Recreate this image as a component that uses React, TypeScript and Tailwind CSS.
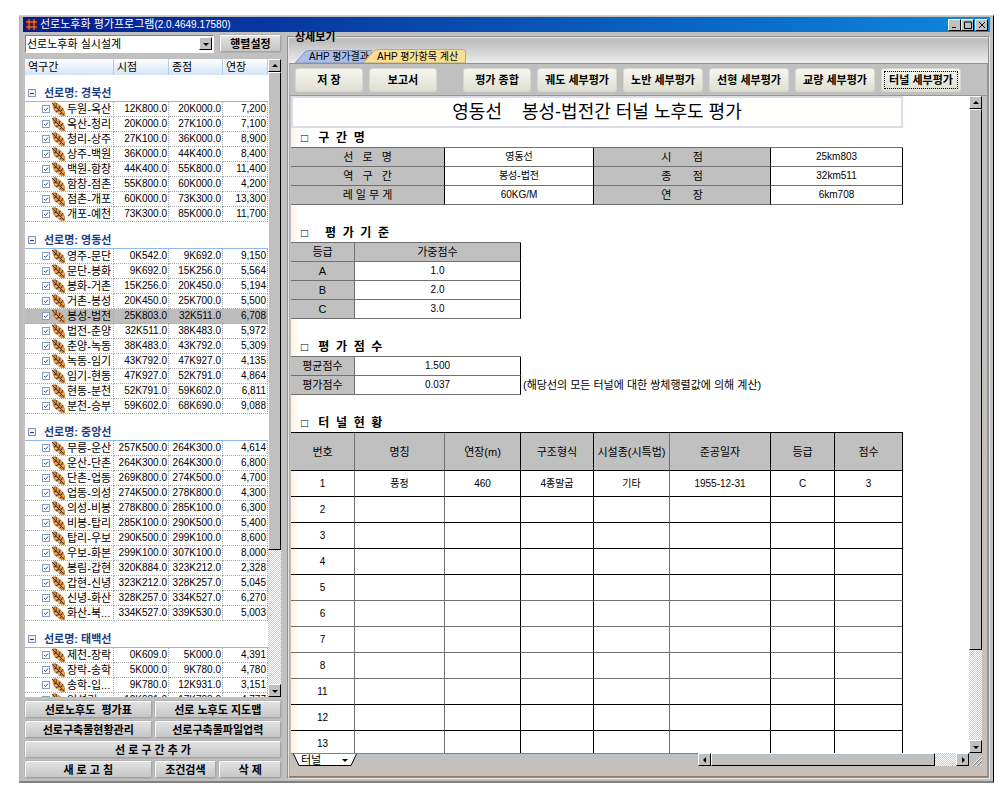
import React from "react";

type Section = [name: string, start: string, end: string, length: string];

const groups: { line: string; sections: Section[] }[] = [
  {
    line: "경북선",
    sections: [
      ["두원-옥산", "12K800.0", "20K000.0", "7,200"],
      ["옥산-청리", "20K000.0", "27K100.0", "7,100"],
      ["청리-상주", "27K100.0", "36K000.0", "8,900"],
      ["상주-백원", "36K000.0", "44K400.0", "8,400"],
      ["백원-함창", "44K400.0", "55K800.0", "11,400"],
      ["함창-점촌", "55K800.0", "60K000.0", "4,200"],
      ["점촌-개포", "60K000.0", "73K300.0", "13,300"],
      ["개포-예천", "73K300.0", "85K000.0", "11,700"],
    ],
  },
  {
    line: "영동선",
    sections: [
      ["영주-문단", "0K542.0", "9K692.0", "9,150"],
      ["문단-봉화", "9K692.0", "15K256.0", "5,564"],
      ["봉화-거촌", "15K256.0", "20K450.0", "5,194"],
      ["거촌-봉성", "20K450.0", "25K700.0", "5,500"],
      ["봉성-법전", "25K803.0", "32K511.0", "6,708"],
      ["법전-춘양", "32K511.0", "38K483.0", "5,972"],
      ["춘양-녹동", "38K483.0", "43K792.0", "5,309"],
      ["녹동-임기", "43K792.0", "47K927.0", "4,135"],
      ["임기-현동", "47K927.0", "52K791.0", "4,864"],
      ["현동-분천", "52K791.0", "59K602.0", "6,811"],
      ["분천-승부", "59K602.0", "68K690.0", "9,088"],
    ],
  },
  {
    line: "중앙선",
    sections: [
      ["무릉-운산", "257K500.0", "264K300.0", "4,614"],
      ["운산-단촌", "264K300.0", "264K300.0", "6,800"],
      ["단촌-업동", "269K800.0", "274K500.0", "4,700"],
      ["업동-의성", "274K500.0", "278K800.0", "4,300"],
      ["의성-비봉", "278K800.0", "285K100.0", "6,300"],
      ["비봉-탑리", "285K100.0", "290K500.0", "5,400"],
      ["탑리-우보", "290K500.0", "299K100.0", "8,600"],
      ["우보-화본", "299K100.0", "307K100.0", "8,000"],
      ["봉림-갑현", "320K884.0", "323K212.0", "2,328"],
      ["갑현-신녕", "323K212.0", "328K257.0", "5,045"],
      ["신녕-화산", "328K257.0", "334K527.0", "6,270"],
      ["화산-북...", "334K527.0", "339K530.0", "5,003"],
    ],
  },
  {
    line: "태백선",
    sections: [
      ["제천-장락", "0K609.0", "5K000.0", "4,391"],
      ["장락-송학", "5K000.0", "9K780.0", "4,780"],
      ["송학-입...", "9K780.0", "12K931.0", "3,151"],
      ["입석리...", "12K931.0", "17K708.0", "4,777"],
    ],
  },
];

const raised =
  "border border-t-white border-l-white border-r-black border-b-black bg-[#c0c0c0]";
const track =
  "bg-[repeating-conic-gradient(#ffffff_0_25%,#cccccc_0_50%)] bg-[length:2px_2px]";

const arrows = {
  up: "M1 5h6L4 2z",
  down: "M1 3h6L4 6z",
  left: "M5 1v6L2 4z",
  right: "M3 1v6l3-3z",
};

function Arrow({ dir }: { dir: keyof typeof arrows }) {
  return (
    <svg viewBox="0 0 8 8" className="size-2" aria-hidden="true">
      <path d={arrows[dir]} fill="#000" />
    </svg>
  );
}

function ArrowButton({ dir, label }: { dir: keyof typeof arrows; label: string }) {
  return (
    <button
      type="button"
      aria-label={label}
      className={`flex size-[13px] shrink-0 items-center justify-center ${raised}`}
    >
      <Arrow dir={dir} />
    </button>
  );
}

function SectionIcon() {
  return (
    <svg viewBox="0 0 14 14" className="size-[14px] shrink-0" aria-hidden="true">
      <path d="M0 1l3-1 5 3 3 3 2 4v4h-3l-3-1-1-2-3-1-2-4z" fill="#d08a40" />
      <path
        d="M0 1l4 4 8 8M4 1l1 3M8 4l-1 3M11 6l-2 3M2 6l3-1M4 10l3-2M8 12l2-2"
        stroke="#54301c"
        strokeWidth="1"
        fill="none"
      />
      <path d="M5 2l1 2M9 5v2M11 9v2M3 7l2 1M6 10l2 1" stroke="#f6c470" strokeWidth="1" />
    </svg>
  );
}

function SectionRow({ section }: { section: Section }) {
  const [name, start, end, length] = section;
  const selected = name === "봉성-법전";
  const cell =
    "h-[15px] overflow-hidden border-r border-b border-dotted border-[#a8a8a8] p-0 pr-px text-right whitespace-nowrap";
  return (
    <tr className={selected ? "bg-[#bdbdbd]" : ""}>
      <td className={cell}>
        <label className="flex h-[14px] items-center pl-[17px]">
          <span className="relative flex size-2 shrink-0">
            <input
              type="checkbox"
              defaultChecked
              className="peer size-2 appearance-none border border-[#8a9cc0] bg-white"
            />
            <svg
              viewBox="0 0 8 8"
              className="pointer-events-none absolute inset-0 hidden size-2 peer-checked:block"
              aria-hidden="true"
            >
              <path d="M2 4l1.5 1.5L6 2.5" fill="none" stroke="#3a4a88" />
            </svg>
          </span>
          <span className="ml-[2px] flex">
            <SectionIcon />
          </span>
          <span className="ml-px">{name}</span>
        </label>
      </td>
      <td className={`text-[10px] ${cell}`}>{start}</td>
      <td className={`text-[10px] ${cell}`}>{end}</td>
      <td className={`text-[10px] ${cell}`}>{length}</td>
    </tr>
  );
}

function SectionList() {
  const head =
    "h-4 border-r border-[#b4cdea] p-0 pl-[3px] text-left font-normal bg-linear-to-b from-white to-[#d3e4f7]";
  return (
    <div className="flex min-h-0 flex-1 overflow-hidden bg-white">
      <div className="min-w-0 flex-1 overflow-hidden">
        <table className="w-full table-fixed border-separate border-spacing-0 text-[11px] leading-[14px]">
          <colgroup>
            <col />
            <col className="w-[55px]" />
            <col className="w-[54px]" />
            <col className="w-[45px]" />
          </colgroup>
          <thead>
            <tr>
              <th className={head}>역구간</th>
              <th className={head}>시점</th>
              <th className={head}>종점</th>
              <th className={head}>연장</th>
            </tr>
          </thead>
          {groups.map((g) => (
            <tbody key={g.line}>
              <tr>
                <th
                  colSpan={4}
                  className="h-[27px] border-b border-[#8fbcec] p-0 text-left align-bottom font-bold text-[#1c3f86]"
                >
                  <span className="flex items-center gap-2 pb-px pl-[3px]">
                    <button
                      type="button"
                      aria-label={`${g.line} 접기`}
                      className="flex size-2 items-center justify-center border border-[#8494b4] bg-[#eef2f8]"
                    >
                      <span className="h-px w-1 bg-[#1c3f86]" />
                    </button>
                    선로명: {g.line}
                  </span>
                </th>
              </tr>
              {g.sections.map((s) => (
                <SectionRow key={s[0]} section={s} />
              ))}
            </tbody>
          ))}
        </table>
      </div>
      <div className={`flex w-[13px] shrink-0 flex-col ${track}`}>
        <ArrowButton dir="up" label="위로" />
        <div className={`h-[478px] ${raised}`} />
        <div className="flex-1" />
        <ArrowButton dir="down" label="아래로" />
      </div>
    </div>
  );
}

function SideButton({ children, className = "" }: { children: string; className?: string }) {
  return (
    <button
      type="button"
      className={`h-[17px] rounded-[2px] border border-[#a4a4a4] border-t-white border-l-white bg-linear-to-b from-[#e2e2e2] to-[#c6c6c6] text-[11px] leading-[14px] font-bold whitespace-pre shadow-[0_0_0_1px_#b2b2b2] ${className}`}
    >
      {children}
    </button>
  );
}

function SidePanel() {
  return (
    <div className="flex w-[256px] shrink-0 flex-col pt-[3px] pb-[3px]">
      <div className="flex h-[18px] gap-[6px]">
        <div className="relative flex-1">
          <select
            aria-label="사업 선택"
            className="block h-[18px] w-full appearance-none border border-[#808080] border-r-white border-b-white bg-white pl-px text-[11px] leading-[14px]"
          >
            <option>선로노후화 실시설계</option>
          </select>
          <span
            className={`pointer-events-none absolute top-[2px] right-[2px] flex size-[13px] items-center justify-center ${raised}`}
          >
            <Arrow dir="down" />
          </span>
        </div>
        <SideButton className="w-[61px]">행렬설정</SideButton>
      </div>
      <div className="mt-[6px] flex min-h-0 flex-1 flex-col">
        <SectionList />
      </div>
      <div className="mt-1 grid grid-cols-4 gap-[3px]">
        <SideButton className="col-span-2">{"선로노후도  평가표"}</SideButton>
        <SideButton className="col-span-2">선로 노후도 지도맵</SideButton>
        <SideButton className="col-span-2">선로구축물현황관리</SideButton>
        <SideButton className="col-span-2">선로구축물파일업력</SideButton>
        <SideButton className="col-span-4">선 로 구 간 추 가</SideButton>
        <SideButton className="col-span-2">새 로 고 침</SideButton>
        <SideButton>조건검색</SideButton>
        <SideButton>삭 제</SideButton>
      </div>
    </div>
  );
}

function Tabs() {
  return (
    <div
      role="tablist"
      className="flex h-[21px] items-end bg-linear-to-b from-[#c0c0c0] to-[#ececec] pl-[6px] text-[10px] leading-[13px]"
    >
      <button type="button" role="tab" aria-selected="false" className="relative h-[13px] w-[77px] pl-[14px] text-left">
        <svg viewBox="0 0 77 13" preserveAspectRatio="none" className="absolute inset-0 size-full" aria-hidden="true">
          <path d="M0 13L10 2Q12 .5 15 .5H77V13z" fill="#a9bfea" stroke="#8a94b0" />
        </svg>
        <span className="relative whitespace-nowrap">AHP 평가결과</span>
      </button>
      <button type="button" role="tab" aria-selected="true" className="relative -ml-[9px] h-[14px] w-[103px] pl-[14px] text-left">
        <svg viewBox="0 0 105 14" preserveAspectRatio="none" className="absolute inset-0 size-full" aria-hidden="true">
          <path d="M0 14L11 2Q13 .5 16 .5H102Q104.500 .5 104.500 3V14z" fill="#fbdf92" stroke="#b8a888" />
        </svg>
        <span className="relative whitespace-nowrap">AHP 평가항목 계산</span>
      </button>
    </div>
  );
}

const detailButtons = ["궤도 세부평가", "노반 세부평가", "선형 세부평가", "교량 세부평가"];

function Toolbar() {
  const base =
    "h-6 shrink-0 rounded-[3px] border border-[#d8d8cc] bg-linear-to-b from-[#f6f6f0] to-[#dedfd2] text-[11px] leading-[14px] font-bold whitespace-nowrap";
  return (
    <div className="flex h-[32px] shrink-0 items-center gap-[6px] overflow-hidden border-b border-[#989898] pl-[5px]">
      <button type="button" className={`w-[68px] ${base}`}>저 장</button>
      <button type="button" className={`w-[68px] ${base}`}>보고서</button>
      <button type="button" className={`ml-5 w-[68px] ${base}`}>평가 종합</button>
      {detailButtons.map((label) => (
        <button key={label} type="button" className={`w-[80px] ${base}`}>
          {label}
        </button>
      ))}
      <button type="button" className={`w-[80px] p-[2px] ${base}`}>
        <span className="flex h-full items-center justify-center border border-dotted border-black">
          터널 세부평가
        </span>
      </button>
    </div>
  );
}

function Heading({ children, first = false }: { children: string; first?: boolean }) {
  return (
    <h2
      className={`flex items-end pl-[10px] text-[12px] leading-[18px] font-bold whitespace-pre ${first ? "h-[19px]" : "h-[37px]"}`}
    >
      {children}
    </h2>
  );
}

const grey = "bg-[#c0c0c0] font-normal";
const line = "h-[19px] border-b border-[#707070] p-0 text-center whitespace-pre";

const infoRows = [
  ["선   로   명", "영동선", "시       점", "25km803"],
  ["역   구   간", "봉성-법전", "종       점", "32km511"],
  ["레 일 무 게", "60KG/M", "연       장", "6km708"],
];

function InfoTable() {
  return (
    <table className="w-[612px] table-fixed border-separate border-spacing-0 border-t border-[#707070]">
      <colgroup>
        <col className="w-[154px]" />
        <col className="w-[149px]" />
        <col className="w-[177px]" />
        <col className="w-[132px]" />
      </colgroup>
      <tbody>
        {infoRows.map(([a, b, c, d]) => (
          <tr key={a}>
            <th className={`${line} ${grey} border-r border-r-black`}>{a}</th>
            <td className={`${line} border-r border-r-black text-[10px]`}>{b}</td>
            <th className={`${line} ${grey} border-r border-r-black`}>{c}</th>
            <td className={`${line} border-r border-r-black text-[10px]`}>{d}</td>
          </tr>
        ))}
      </tbody>
    </table>
  );
}

function PairTable({ head, rows }: { head?: [string, string]; rows: [string, string][] }) {
  return (
    <table className="w-[230px] shrink-0 table-fixed border-separate border-spacing-0 border-t border-[#707070]">
      <colgroup>
        <col className="w-[64px]" />
        <col />
      </colgroup>
      {head && (
        <thead>
          <tr>
            <th className={`${line} ${grey} border-r`}>{head[0]}</th>
            <th className={`${line} ${grey} border-r border-r-black`}>{head[1]}</th>
          </tr>
        </thead>
      )}
      <tbody>
        {rows.map(([k, v]) => (
          <tr key={k}>
            <th className={`${line} ${grey} border-r`}>{k}</th>
            <td className={`${line} border-r border-r-black text-[10px]`}>{v}</td>
          </tr>
        ))}
      </tbody>
    </table>
  );
}

const columns = ["번호", "명칭", "연장(m)", "구조형식", "시설종(시특법)", "준공일자", "등급", "점수"];
const tunnelRows: string[][] = [
  ["1", "풍정", "460", "4종말굽", "기타", "1955-12-31", "C", "3"],
  ...["2", "3", "4", "5", "6", "7", "8", "11", "12", "13"].map((n) => [n, "", "", "", "", "", "", ""]),
];

function TunnelTable() {
  const side = (i: number) => (i === 0 || i === 1 || i === 4 ? "border-r border-r-[#707070]" : "border-r border-r-black");
  return (
    <table className="w-[612px] table-fixed border-separate border-spacing-0 border-t border-black">
      <colgroup>
        <col className="w-[64px]" />
        <col className="w-[90px]" />
        <col className="w-[76px]" />
        <col className="w-[73px]" />
        <col className="w-[76px]" />
        <col className="w-[101px]" />
        <col className="w-[64px]" />
        <col className="w-[68px]" />
      </colgroup>
      <thead>
        <tr>
          {columns.map((c, i) => (
            <th key={c} className={`h-[38px] border-b border-b-black p-0 whitespace-nowrap ${grey} ${side(i)}`}>
              {c}
            </th>
          ))}
        </tr>
      </thead>
      <tbody className="text-[10px]">
        {tunnelRows.map((row, r) => (
          <tr key={row[0]}>
            {row.map((v, i) => (
              <td
                key={i}
                className={`h-[26px] border-b p-0 text-center ${r >= 4 && r <= 7 ? "border-b-[#707070]" : "border-b-black"} ${side(i)}`}
              >
                {v}
              </td>
            ))}
          </tr>
        ))}
      </tbody>
    </table>
  );
}

function Sheet() {
  return (
    <div className="flex min-h-0 flex-1 flex-col">
      <div className="flex min-h-0 flex-1">
        <div className="min-w-0 flex-1 overflow-hidden bg-[linear-gradient(to_right,#fff1e2,#ffffff_8px)] text-[11px] leading-[14px]">
          <h1 className="flex h-8 w-[612px] items-center justify-center border-2 border-[#dcdce8] bg-white text-[18px] leading-6 whitespace-pre">
            {"영동선    봉성-법전간 터널 노후도 평가"}
          </h1>
          <Heading first>{"□   구  간  명"}</Heading>
          <InfoTable />
          <Heading>{"□     평  가  기  준"}</Heading>
          <PairTable
            head={["등급", "가중점수"]}
            rows={[
              ["A", "1.0"],
              ["B", "2.0"],
              ["C", "3.0"],
            ]}
          />
          <Heading>{"□   평  가  점  수"}</Heading>
          <div className="flex items-end gap-[2px]">
            <PairTable
              rows={[
                ["평균점수", "1.500"],
                ["평가점수", "0.037"],
              ]}
            />
            <p className="pb-[3px] whitespace-nowrap">(해당선의 모든 터널에 대한 쌍체행렬값에 의해 계산)</p>
          </div>
          <Heading>{"□   터  널  현  황"}</Heading>
          <TunnelTable />
        </div>
        <div className={`flex w-[13px] shrink-0 flex-col ${track}`}>
          <ArrowButton dir="up" label="위로" />
          <div className={`h-[541px] ${raised}`} />
          <div className="flex-1" />
          <ArrowButton dir="down" label="아래로" />
        </div>
      </div>
      <div className="flex h-[13px] shrink-0 border-t border-[#808080] bg-[#c0c0c0]">
        <button type="button" className="relative h-3 w-[66px] text-[11px] leading-[12px]">
          <svg viewBox="0 0 66 12" className="absolute inset-0 h-3 w-[66px]" aria-hidden="true">
            <path d="M2 -1L8 11.500H60L66 -1" fill="#fff" stroke="#000" />
          </svg>
          <span className="relative flex items-center justify-between pr-2 pl-[10px]">
            터널
            <Arrow dir="down" />
          </span>
        </button>
        <div className="flex-1" />
        <div className={`-mt-px flex h-[13px] w-[271px] ${track}`}>
          <ArrowButton dir="left" label="왼쪽" />
          <div className={`w-[224px] ${raised}`} />
          <div className="flex-1" />
          <ArrowButton dir="right" label="오른쪽" />
        </div>
        <svg viewBox="0 0 13 13" className="-mt-px size-[13px] shrink-0 bg-[#c0c0c0]" aria-hidden="true">
          <path d="M3 13L13 3M7 13l6-6M11 13l2-2" stroke="#fff" />
          <path d="M4 13l9-9M8 13l5-5" stroke="#808080" />
        </svg>
      </div>
    </div>
  );
}

function CaptionButton({ label, d }: { label: string; d: string }) {
  return (
    <button type="button" aria-label={label} className={`flex h-3 w-[13px] items-center justify-center ${raised}`}>
      <svg viewBox="0 0 8 8" className="size-2" aria-hidden="true">
        <path d={d} fill="none" stroke="#000" />
      </svg>
    </button>
  );
}

export default function App() {
  return (
    <div className="h-screen min-h-[600px] bg-white pt-[15px] pr-[7px] pb-[11px] pl-[19px] font-['Liberation_Sans','Noto_Sans_CJK_KR',sans-serif] text-black">
      <div className="flex h-full flex-col border-t border-r border-b-2 border-l border-t-[#d4d4d4] border-r-black border-b-[#808080] border-l-[#b0b0b0] bg-[#c0c0c0] pt-px pr-[3px] pl-[3px]">
        <header className="flex h-[15px] shrink-0 items-center bg-linear-to-r from-[#0a1a8c] via-[#0a50b4] to-[#1088dc] pr-[2px] pl-[3px] text-[11px] leading-[14px] text-white">
          <svg viewBox="0 0 11 11" className="size-[11px]" aria-hidden="true">
            <path d="M0 0h11v11H0z" fill="#5a1830" />
            <path d="M3 0v11M8 0v11M0 3h11M0 8h11" stroke="#f08a3c" />
          </svg>
          <span className="ml-[3px] flex-1">
            선로노후화 평가프로그램<span className="text-[10px]">(2.0.4649.17580)</span>
          </span>
          <CaptionButton label="최소화" d="M1 6.500h4" />
          <CaptionButton label="최대화" d="M0.500 1h7v6.500h-7z" />
          <span className="w-px" />
          <CaptionButton label="닫기" d="M1 1l6 6M7 1L1 7" />
        </header>
        <div className="flex min-h-0 flex-1 gap-[6px] pl-[2px]">
          <SidePanel />
          <div className="flex min-w-0 flex-1 pb-[2px]">
            <fieldset className="flex min-w-0 flex-1 flex-col border-2 border-[#e4e4e4] [border-style:groove]">
              <legend className="ml-[5px] px-px text-[11px] leading-[10px] font-bold">상세보기</legend>
              <Tabs />
              <div className="flex min-h-0 flex-1 flex-col border border-t-[#b08a50] border-r-[#b09080] border-b-[#907868] border-l-[#c8a890] bg-[#c0c0c0]">
                <Toolbar />
                <div className="flex min-h-0 flex-1 flex-col bg-linear-to-b from-[#c0c0c0] to-[#c8bfb6] pr-[5px] pb-[10px] pl-px">
                  <Sheet />
                </div>
              </div>
            </fieldset>
          </div>
        </div>
      </div>
    </div>
  );
}
